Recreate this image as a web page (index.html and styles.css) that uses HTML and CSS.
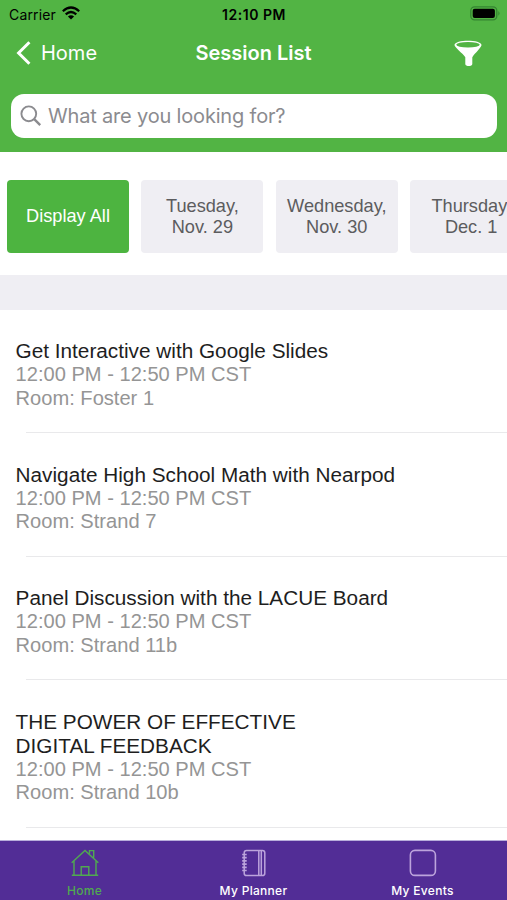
FILE: index.html
```html
<!DOCTYPE html>
<html lang="en">
<head>
<meta charset="utf-8">
<title>Session List</title>
<link rel="stylesheet" href="styles.css">
</head>
<body>
<div class="app">
  <header class="header">
    <div class="status">
      <div class="carrier"><span class="carrier-name">Carrier</span>
        <svg class="wifi" width="18" height="14" viewBox="0 0 18 14"><g fill="none" stroke="#000" stroke-width="2.2"><path d="M.8 5.2Q9-2.2 17.2 5.2"/><path d="M3.7 8.3Q9 3.7 14.3 8.3"/></g><path d="M5.9 10.4Q9 7.9 12.1 10.4L9 13.6Z"/></svg>
      </div>
      <span class="clock">12:10 PM</span>
      <svg class="battery" width="31" height="15" viewBox="0 0 31 15"><rect x=".8" y=".9" width="26" height="13" rx="3.8" fill="none" stroke="#348431" stroke-width="1.3"/><rect x="2.7" y="2.8" width="22.2" height="9.2" rx="2"/><path d="M28.4 5q2.3 2.4 0 4.8z" fill="#348431"/></svg>
    </div>
    <nav class="nav">
      <a class="back"><svg width="16" height="26" viewBox="0 0 16 26"><path d="M13.4 2.2 2.6 13l10.8 10.8" fill="none" stroke="#fff" stroke-width="3"/></svg><span class="back-label">Home</span></a>
      <h1 class="title"><span>Session List</span></h1>
      <svg class="filter" width="28" height="27" viewBox="0 0 28 27"><path d="M.5 5C.5-.8 27.5-.8 27.5 5c0 2.5-6.5 8-9.2 12.2V24c0 2.8-7 2.8-7 0v-6.8C8.5 13 .5 7.5.5 5Z" fill="#fff"/><ellipse cx="14" cy="4.7" rx="11.8" ry="2.8" fill="#52b444"/></svg>
    </nav>
    <div class="search">
      <svg width="22" height="22" viewBox="0 0 22 22" fill="none" stroke="#8b8b8f" stroke-width="1.9"><circle cx="8.8" cy="8.8" r="7.4"/><path d="m14.2 14.2 6 6" stroke-width="2.4"/></svg>
      <span class="placeholder">What are you looking for?</span>
    </div>
  </header>
  <div class="days">
    <div class="day active"><span>Display All</span></div>
    <div class="day"><span>Tuesday,<br>Nov. 29</span></div>
    <div class="day"><span>Wednesday,<br>Nov. 30</span></div>
    <div class="day"><span>Thursday,<br>Dec. 1</span></div>
  </div>
  <div class="band"></div>
  <main class="sessions">
    <article class="session"><h2>Get Interactive with Google Slides</h2><p>12:00 PM - 12:50 PM CST</p><p>Room: Foster 1</p></article>
    <article class="session"><h2>Navigate High School Math with Nearpod</h2><p>12:00 PM - 12:50 PM CST</p><p>Room: Strand 7</p></article>
    <article class="session"><h2>Panel Discussion with the LACUE Board</h2><p>12:00 PM - 12:50 PM CST</p><p>Room: Strand 11b</p></article>
    <article class="session"><h2>THE POWER OF EFFECTIVE<br>DIGITAL FEEDBACK</h2><p>12:00 PM - 12:50 PM CST</p><p>Room: Strand 10b</p></article>
  </main>
  <footer class="tabs">
    <div class="tab selected"><svg width="28" height="28" viewBox="0 0 28 28" fill="none" stroke="currentColor" stroke-width="1.4"><path d="M.7 13.8 14 1.4l13.3 12.4M3 12v14.3h22V12M.8 26.3h26.4M10.2 26V17.8h7.6V26M18.5 4.7V1.6h4.2v7.2"/></svg><span>Home</span></div>
    <div class="tab"><svg width="28" height="28" viewBox="0 0 28 28" fill="none" stroke="#bca4dc" stroke-width="1.5"><rect x="4.2" y="1.4" width="20.6" height="25.2" rx="2.4"/><path d="M18.8 1.4v25.2M21.3 1.4v25.2"/><path d="M2.2 5.5h4.5M2.2 8.7h4.5M2.2 11.9h4.5M2.2 15.1h4.5M2.2 18.3h4.5M2.2 21.5h4.5" stroke-width="1.7"/></svg><span>My Planner</span></div>
    <div class="tab"><svg width="28" height="28" viewBox="0 0 28 28" fill="none" stroke="#bca4dc" stroke-width="1.6"><rect x="1.4" y="1.4" width="25" height="25" rx="4.5"/></svg><span>My Events</span></div>
  </footer>
</div>
</body>
</html>
```
FILE: styles.css
```css
* { box-sizing: border-box; }
body { margin: 0; background: #fff; font-family: "Liberation Sans", Arial, sans-serif; }
h1, h2, p { margin: 0; font-weight: 400; }
svg { display: block; flex: none; }
.app { width: 507px; height: 900px; overflow: hidden; display: flex; flex-direction: column; }
.header { flex: none; height: 152px; background: #52b444; font-family: Inter, sans-serif; }
.status { height: 28px; display: grid; grid-template-columns: 1fr auto 1fr; align-items: center; padding: 0 6px 0 9px; color: #000; }
.carrier { display: flex; align-items: center; gap: 6px; font-size: 14px; letter-spacing: .15px; }
.wifi { margin-top: -2px; }
.clock { font-size: 14px; font-weight: 600; letter-spacing: .55px; margin-right: 2px; }
.battery { justify-self: end; margin-top: -2px; }
.nav { height: 49px; display: grid; grid-template-columns: 1fr auto 1fr; align-items: center; padding: 0 25px 0 16px; color: #fff; }
.back { display: flex; align-items: center; gap: 9px; font-size: 20px; }
.title { font-size: 20px; font-weight: 600; letter-spacing: 0; margin-left: 9px; }
.filter { justify-self: end; margin-top: 2px; }
.search { margin: 17px 10px 0 11px; height: 44px; border-radius: 13px; background: #fff; display: flex; align-items: center; gap: 6px; padding-left: 9px; color: #8b8b8f; font-size: 20px; }
.placeholder { letter-spacing: -.18px; }
.days { flex: none; height: 122.5px; padding: 28px 0 0 7px; display: flex; gap: 12.4px; overflow: hidden; }
.day { flex: none; width: 122px; height: 73px; border-radius: 4px; background: #efeef3; color: #5c5c5e; display: flex; align-items: center; justify-content: center; text-align: center; font-size: 18.2px; line-height: 21px; }
.day.active { background: #4db440; color: #fff; }
.band { flex: none; height: 35.5px; background: #efeef3; }
.sessions { flex: 1; min-height: 0; overflow: hidden; }
.session { padding: 29px 0 23.5px 15.6px; background: linear-gradient(#e9e9eb, #e9e9eb) 26px 100% / 100% 1.4px no-repeat; }
.session h2 { font-size: 20.75px; line-height: 24px; color: #1e1e1e; }
.session p { font-size: 20.1px; line-height: 23.5px; color: #959595; }
.tabs { flex: none; height: 60.5px; background: #522d96; border-top: 1px solid #b8aedb; display: grid; grid-template-columns: repeat(3, 1fr); font-family: Inter, sans-serif; }
.tab { display: flex; flex-direction: column; align-items: center; padding-top: 8px; color: #fff; font-size: 12px; font-weight: 500; line-height: 14px; letter-spacing: .3px; gap: 7px; }
.tab.selected { color: #50aa50; }
```
